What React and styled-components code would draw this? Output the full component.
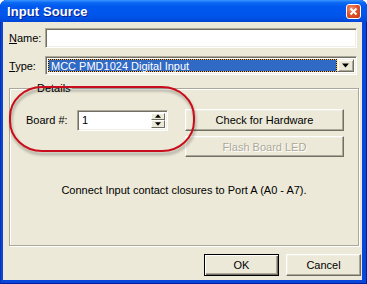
import styled, { createGlobalStyle } from "styled-components";

const GlobalStyle = createGlobalStyle`
  html, body {
    margin: 0;
    padding: 0;
    background: #ffffff;
  }
  body {
    font-family: "Liberation Sans", Arial, sans-serif;
    font-size: 11px;
    color: #000;
  }
`;

const Window = styled.div`
  position: relative;
  width: 367px;
  height: 284px;
  box-sizing: border-box;
  display: flex;
  flex-direction: column;
  padding: 0 5px 4px 3px;
  background: #0847d9;
  box-shadow: inset 1px 0 0 #0831b0, inset -1px 0 0 #001ea0, inset 0 -1px 0 #001ea0;
  border-radius: 7px 7px 0 0;
  overflow: hidden;
`;

const TitleBar = styled.div`
  height: 22px;
  flex: none;
  margin: 0 -5px 0 -3px;
  padding: 0 6px 0 7px;
  display: flex;
  align-items: center;
  justify-content: space-between;
  background: linear-gradient(
    to bottom,
    #3d95ff 0%,
    #0a6af4 12%,
    #0058ee 30%,
    #0056ec 65%,
    #004fe2 85%,
    #0045d4 100%
  );
`;

const Title = styled.span`
  font-family: "Liberation Sans", Arial, sans-serif;
  font-weight: bold;
  font-size: 13px;
  color: #fff;
  text-shadow: 1px 1px 0 #0a1e8c;
  letter-spacing: 0.1px;
`;

const CloseBox = styled.div`
  width: 15px;
  height: 15px;
  box-sizing: border-box;
  border: 1px solid #fff;
  border-radius: 3px;
  background: radial-gradient(circle at 35% 30%, #f09a7a 0%, #e0542c 45%, #c63a14 100%);
  display: flex;
  align-items: center;
  justify-content: center;
`;

const Client = styled.div`
  flex: 1;
  min-height: 0;
  background: #ece9d8;
  display: flex;
  flex-direction: column;
  padding: 6px 0 0 6px;
  box-sizing: border-box;
`;

const Row = styled.div`
  display: flex;
  align-items: center;
  margin-top: ${(p) => p.$top || 0}px;
  padding-right: ${(p) => p.$right || 0}px;
`;

const Label = styled.label`
  width: ${(p) => p.$width || 36}px;
  flex: none;
  white-space: nowrap;
  u {
    text-decoration: underline;
  }
`;

const Sunken = styled.div`
  box-sizing: border-box;
  border: 1px solid;
  border-color: #aca899 #fff #fff #aca899;
  background: #fff;
  box-shadow: inset 1px 1px 0 #716f64, inset -1px -1px 0 #f1efe2;
`;

const TextBox = styled(Sunken)`
  flex: 1;
  height: 20px;
`;

const Combo = styled(Sunken)`
  flex: 1;
  height: 19px;
  display: flex;
  padding: 2px;
`;

const Selected = styled.div`
  flex: 1;
  box-sizing: border-box;
  border: 1px dotted #111;
  background: linear-gradient(#316ac5, #316ac5) padding-box, #f1b84a border-box;
  color: #fff;
  line-height: 13px;
  padding-left: 2px;
  white-space: nowrap;
`;

const DropButton = styled.div`
  width: 17px;
  flex: none;
  box-sizing: border-box;
  background: #ece9d8;
  border: 1px solid;
  border-color: #f1efe2 #716f64 #716f64 #f1efe2;
  box-shadow: inset 1px 1px 0 #fff, inset -1px -1px 0 #aca899;
  display: flex;
  align-items: center;
  justify-content: center;
`;

const GroupBox = styled.fieldset`
  margin: 0 3px 0 0;
  padding: 14px 14px 0 16px;
  min-width: 0;
  height: 164px;
  box-sizing: border-box;
  border: 1px solid #aca899;
  box-shadow: inset 1px 1px 0 #fff, 1px 1px 0 #fff;
  display: flex;
  flex-direction: column;
`;

const Legend = styled.legend`
  padding: 0 1px;
  margin-left: 10px;
  background: #ece9d8;
  line-height: 13px;
`;

const DetailGrid = styled.div`
  display: grid;
  grid-template-columns: 51px 91px 1fr;
  row-gap: 5px;
  align-items: center;
`;

const SpinBox = styled(Sunken)`
  height: 21px;
  display: flex;
  padding: 2px 2px 2px 4px;
  align-items: center;
`;

const SpinValue = styled.span`
  flex: 1;
`;

const SpinButtons = styled.div`
  width: 14px;
  height: 15px;
  display: flex;
  flex-direction: column;
`;

const SpinHalf = styled.div`
  flex: 1;
  box-sizing: border-box;
  background: #ece9d8;
  border: 1px solid;
  border-color: #fff #716f64 #716f64 #fff;
  display: flex;
  align-items: center;
  justify-content: center;
`;

const Button = styled.button`
  font-family: "Liberation Sans", Arial, sans-serif;
  font-size: 11px;
  height: ${(p) => p.$height || 22}px;
  width: ${(p) => p.$width || "auto"};
  justify-self: end;
  box-sizing: border-box;
  padding: 0;
  background: #ece9d8;
  color: ${(p) => (p.disabled ? "#aca899" : "#000")};
  text-shadow: ${(p) => (p.disabled ? "1px 1px 0 #fff" : "none")};
  border: 1px solid;
  border-color: ${(p) =>
    p.$default ? "#000" : "#fff #716f64 #716f64 #fff"};
  box-shadow: ${(p) =>
    p.$default
      ? "inset 1px 1px 0 #fff, inset -1px -1px 0 #716f64, inset -2px -2px 0 #aca899"
      : "inset -1px -1px 0 #aca899, inset 1px 1px 0 #f1efe2"};
`;

const Notice = styled.p`
  margin: 0;
  margin-top: 27px;
  line-height: 13px;
  text-align: center;
  padding-right: 2px;
`;

const Footer = styled.div`
  display: flex;
  justify-content: flex-end;
  gap: 7px;
  margin-top: 8px;
  padding-right: 1px;
`;

const Spacer = styled.div`
  height: ${(p) => p.$h}px;
  flex: none;
`;

const Annotation = styled.svg`
  position: absolute;
  left: 6px;
  top: 83px;
  pointer-events: none;
`;

const Triangle = ({ up, size = 7 }) => (
  <svg width={size} height={Math.ceil(size / 2) + 1} viewBox="0 0 7 4">
    <polygon points={up ? "3.5,0 7,4 0,4" : "0,0 7,0 3.5,4"} fill="#000" />
  </svg>
);

export default function App() {
  return (
    <>
      <GlobalStyle />
      <Window>
        <TitleBar>
          <Title>Input Source</Title>
          <CloseBox>
            <svg width="9" height="9" viewBox="0 0 9 9">
              <path d="M1.5 1.5 L7.5 7.5 M7.5 1.5 L1.5 7.5" stroke="#fff" strokeWidth="1.8" />
            </svg>
          </CloseBox>
        </TitleBar>
        <Client>
          <Row $right={5}>
            <Label>
              <u>N</u>ame:
            </Label>
            <TextBox />
          </Row>
          <Row $top={8} $right={5}>
            <Label>
              <u>T</u>ype:
            </Label>
            <Combo>
              <Selected>MCC PMD1024 Digital Input</Selected>
              <DropButton>
                <Triangle />
              </DropButton>
            </Combo>
          </Row>
          <Spacer $h={7} />
          <GroupBox>
            <Legend>Details</Legend>
            <DetailGrid>
              <Label $width={51}>Board #:</Label>
              <SpinBox>
                <SpinValue>1</SpinValue>
                <SpinButtons>
                  <SpinHalf>
                    <Triangle up size={6} />
                  </SpinHalf>
                  <SpinHalf>
                    <Triangle size={6} />
                  </SpinHalf>
                </SpinButtons>
              </SpinBox>
              <Button $width="159px">Check for Hardware</Button>
              <span />
              <span />
              <Button disabled $width="159px" $height={21}>
                Flash Board LED
              </Button>
            </DetailGrid>
            <Notice>Connect Input contact closures to Port A (A0 - A7).</Notice>
          </GroupBox>
          <Footer>
            <Button $default $width="75px">
              OK
            </Button>
            <Button $width="75px">Cancel</Button>
          </Footer>
        </Client>
        <Annotation width="200" height="80" viewBox="0 0 200 80">
          <defs>
            <filter id="shade" x="-10%" y="-10%" width="130%" height="140%">
              <feGaussianBlur in="SourceAlpha" stdDeviation="1.5" />
              <feOffset dx="1" dy="3" result="blur" />
              <feComponentTransfer>
                <feFuncA type="linear" slope="0.35" />
              </feComponentTransfer>
              <feMerge>
                <feMergeNode />
                <feMergeNode in="SourceGraphic" />
              </feMerge>
            </filter>
          </defs>
          <rect
            x="4"
            y="4"
            width="184"
            height="64"
            rx="32"
            ry="30"
            fill="none"
            stroke="#c8101a"
            strokeWidth="2"
            filter="url(#shade)"
          />
        </Annotation>
      </Window>
    </>
  );
}
